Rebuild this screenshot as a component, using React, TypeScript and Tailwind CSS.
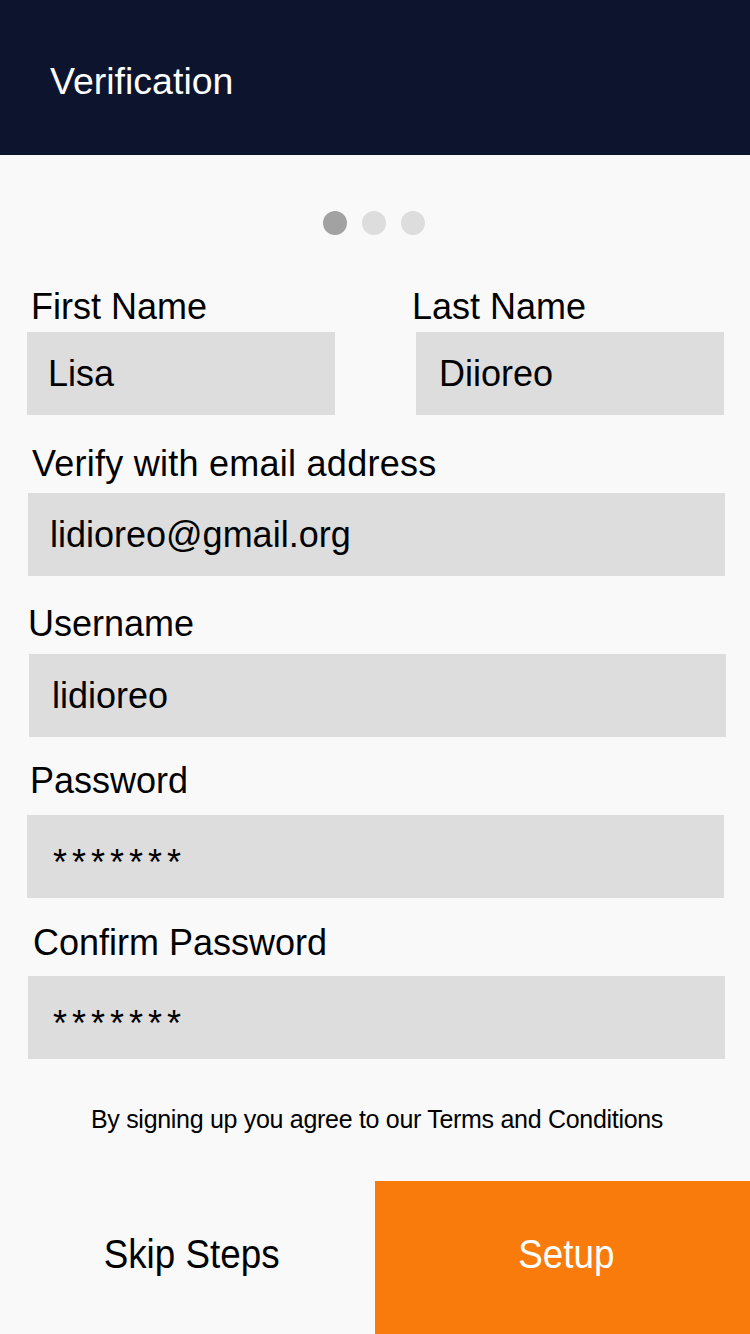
import React from "react";

function Box({ children, className = "" }: { children: React.ReactNode; className?: string }) {
  return (
    <div className={"h-[83px] bg-[#dddddd] flex items-center text-[36px] leading-[40px] text-black " + className}>
      {children}
    </div>
  );
}

export default function App() {
  return (
    <div className="min-h-[1334px] w-[750px] bg-[#f9f9f9] flex flex-col font-['Liberation_Sans',Arial,sans-serif] text-black">
      <header className="h-[155px] bg-[#0c142e] pl-[50px] pt-[61px]">
        <h1 className="text-[37.5px] leading-[40px] text-white">Verification</h1>
      </header>

      <div className="mt-[56px] flex justify-center gap-[15px] pr-[3px]">
        <span className="h-[24px] w-[24px] rounded-full bg-[#a2a2a2]" />
        <span className="h-[24px] w-[24px] rounded-full bg-[#dddddd]" />
        <span className="h-[24px] w-[24px] rounded-full bg-[#dddddd]" />
      </div>

      <div className="pl-[27px] pr-[26px] flex flex-col">
        <div className="mt-[52px] grid grid-cols-2 gap-[81px]">
          <div className="flex flex-col">
            <label className="ml-[4px] text-[36px] leading-[40px]">First Name</label>
            <Box className="mt-[5px] pl-[21px]">Lisa</Box>
          </div>
          <div className="flex flex-col">
            <label className="ml-[-4px] text-[36px] leading-[40px]">Last Name</label>
            <Box className="mt-[5px] pl-[23px]">Diioreo</Box>
          </div>
        </div>

        <label className="mt-[29px] ml-[5px] text-[36px] leading-[40px] tracking-[0.25px]">Verify with email address</label>
        <Box className="mt-[9px] ml-[1px] mr-[-1px] pl-[22px]">lidioreo@gmail.org</Box>

        <label className="mt-[28px] ml-[1px] text-[36px] leading-[40px]">Username</label>
        <Box className="mt-[10px] ml-[2px] mr-[-2px] pl-[23px]">lidioreo</Box>

        <label className="mt-[24px] ml-[3px] text-[36px] leading-[40px]">Password</label>
        <Box className="mt-[14px] pl-[26px]">
          <span className="tracking-[5px] translate-y-[6px] inline-block">*******</span>
        </Box>

        <label className="mt-[25px] ml-[6px] text-[36px] leading-[40px]">Confirm Password</label>
        <Box className="mt-[13px] ml-[1px] mr-[-1px] pl-[25px]">
          <span className="tracking-[5px] translate-y-[6px] inline-block">*******</span>
        </Box>
      </div>

      <p className="mt-[45px] text-center text-[25px] leading-[30px] tracking-[-0.3px] pl-[4px]">
        By signing up you agree to our Terms and Conditions
      </p>

      <div className="mt-auto grid grid-cols-2 h-[153px]">
        <button className="flex items-center justify-center pb-[8px] pl-[8px] text-black">
          <span className="inline-block text-[40px] leading-[44px] scale-x-[0.92]">Skip Steps</span>
        </button>
        <button className="flex items-center justify-center pb-[8px] pl-[7px] bg-[#f97b0b] text-white">
          <span className="inline-block text-[40px] leading-[44px] scale-x-[0.92]">Setup</span>
        </button>
      </div>
    </div>
  );
}
